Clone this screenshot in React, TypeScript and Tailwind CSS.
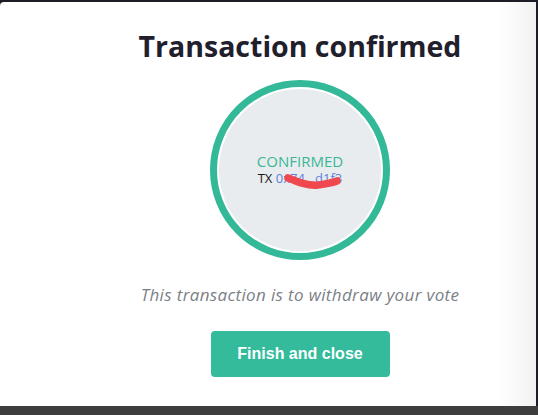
import React from 'react';

const font = { fontFamily: '"Open Sans", "Noto Sans", sans-serif' };

const App: React.FC = () => {
  return (
    <div className="w-[538px] h-[415px] bg-[#1c1d26] flex flex-col overflow-hidden">
      <div className="flex-1 flex pt-[2px]">
        <div className="w-[536px] h-full rounded-tl-[4px] bg-gradient-to-r from-white from-[93%] to-[#f2f2f2] flex flex-col items-center pl-[64px]">
          <h1 className="mt-[26px] text-[28.5px] leading-[36px] font-bold text-[#1f202c]" style={font}>
            Transaction confirmed
          </h1>

          <div className="mt-[16px] w-[180px] h-[180px] rounded-full border-[7px] border-[#33b898] p-[2px] bg-white">
            <div className="w-full h-full rounded-full bg-[#e8ecef] flex flex-col items-center justify-center">
              <div className="text-[15px] leading-[17px] text-[#39b795]" style={font}>
                CONFIRMED
              </div>
              <div className="relative text-[13px] leading-[17px] text-[#1a1a1a]" style={font}>
                TX <span className="text-[#5b7fdc]">0x74...d1f3</span>
                <svg className="absolute left-[26px] top-[3px]" width="58" height="18" viewBox="0 0 58 18">
                  <path
                    d="M4 5 C 14 9, 24 13, 34 12 C 42 11, 48 10, 53 8"
                    stroke="#f0484f"
                    strokeWidth="7.5"
                    strokeLinecap="round"
                    fill="none"
                  />
                </svg>
              </div>
            </div>
          </div>

          <p className="mt-[24px] text-[17px] leading-[22px] italic tracking-[0.35px] text-[#7b7f86]" style={font}>
            This transaction is to withdraw your vote
          </p>

          <button
            className="mt-[25px] w-[179px] h-[46px] rounded-[4px] bg-[#33bb9c] text-white text-[16px] font-bold"
            style={{ fontFamily: '"Liberation Sans", Arial, sans-serif' }}
          >
            Finish and close
          </button>
        </div>
      </div>
      <div className="h-[9px] bg-[#3d3d3d]" />
    </div>
  );
};

export default App;
